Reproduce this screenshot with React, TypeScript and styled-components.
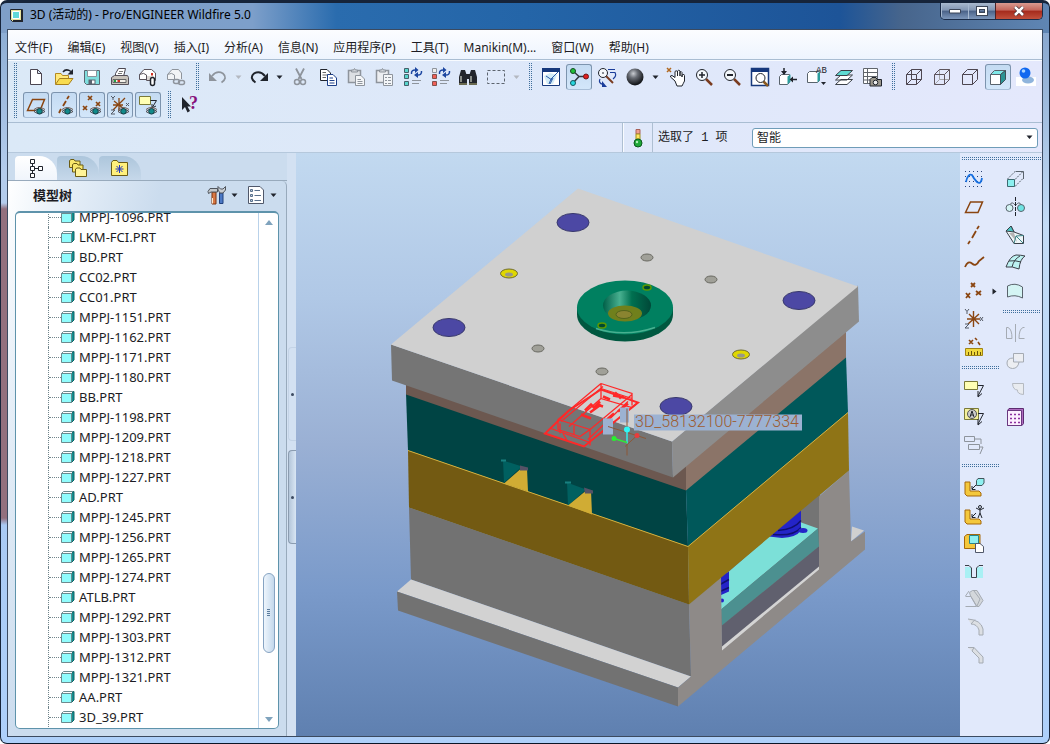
import React from "react";
import styled, { createGlobalStyle, css } from "styled-components";

const GlobalStyle = createGlobalStyle`
  *, *::before, *::after { box-sizing: border-box; }
  body {
    margin: 0;
    font: 12px/16px "Noto Sans", "Noto Sans CJK SC", sans-serif;
    color: #1c1c24;
  }
  button, select { font: inherit; color: inherit; }
`;

/* ---------- window frame ---------- */

const Frame = styled.div`
  display: flex;
  flex-direction: column;
  height: 100vh;
  padding: 0 6px 6px;
  border: 1px solid #16243a;
  border-top-width: 3px;
  border-bottom-color: #0c1626;
  border-radius: 7px;
  background:
    linear-gradient(90deg, #7f9fc8 0, #7d9fca 24%, #2a6cae 32%, #2465a8 50%, #1d5498 80%, #47658c 86%, #5f86b4 100%) top / 100% 30px no-repeat,
    linear-gradient(180deg, #86a8d0 0, #b4ccec 170px, #b4ccec 200px, #93707e 206px, #93707e 515px, #a9caf4 522px, #aed0fa 100%) left / 6px 100% no-repeat,
    linear-gradient(180deg, #7f9fc8 0, #c4dcf6 30%, #aed0fa 100%);
`;

const TitleBar = styled.header`
  display: flex;
  align-items: center;
  justify-content: space-between;
  height: 26px;
  flex: none;
`;

const Title = styled.h1`
  display: flex;
  align-items: center;
  gap: 6px;
  margin: 0;
  padding: 0 8px 2px 1px;
  font-size: 12px;
  line-height: 22px;
  font-weight: 400;
  color: #000;
`;

const WindowButtons = styled.div`
  display: flex;
  align-self: flex-start;
  border: 1px solid #1b2c48;
  border-top: 0;
  border-radius: 0 0 5px 5px;
  overflow: hidden;
`;

const WindowButton = styled.button<{ $close?: boolean }>`
  display: flex;
  align-items: center;
  justify-content: center;
  width: ${(p) => (p.$close ? 47 : 27)}px;
  height: 16px;
  padding: 0;
  border: 0;
  border-left: 1px solid ${(p) => (p.$close ? "#4a2228" : "#a7b9d0")};
  background: ${(p) =>
    p.$close
      ? "linear-gradient(#d99a90 0, #c4655a 45%, #a52a1c 50%, #c2503c 100%)"
      : "linear-gradient(#a9b9ce 0, #8195b2 45%, #4a6288 50%, #7d97bb 100%)"};
`;

const Client = styled.div`
  display: flex;
  flex-direction: column;
  flex: 1;
  min-height: 0;
  border: 1px solid #3b4a60;
  background: linear-gradient(90deg, #dbe9f7 0, #dfe8fa 60%, #e4e8fc 100%);
`;

/* ---------- menu and toolbars ---------- */

const MenuBar = styled.nav`
  display: flex;
  align-items: center;
  gap: 15px;
  height: 30px;
  padding: 6px 7px 0;
  flex: none;
  background: linear-gradient(#fcfdff, #edf4fe);
  border-bottom: 1px solid #a9bdd2;
`;

const MenuItem = styled.button`
  padding: 0;
  border: 0;
  background: none;
  white-space: nowrap;
`;

const ToolbarArea = styled.div`
  flex: none;
  padding: 2px 0 3px;
  border-top: 1px solid #f8fbff;
  border-bottom: 1px solid #a9bdd2;
`;

const ToolRow = styled.div`
  display: flex;
  height: 28px;
`;

const grip = css`
  background: conic-gradient(#3f6f9c 25%, transparent 0) 0 0 / 2px 2px;
`;

const Grip = styled.span`
  flex: none;
  width: 4px;
  margin: 0 5px;
  ${grip}
`;

const ToolButton = styled.button<{ $pressed?: boolean }>`
  display: flex;
  align-items: center;
  justify-content: center;
  flex: none;
  width: 26px;
  height: 26px;
  margin: 1px;
  padding: 0;
  border: 1px solid ${(p) => (p.$pressed ? "#7d94ae" : "transparent")};
  border-bottom-color: ${(p) => (p.$pressed ? "#a9bfd8" : "transparent")};
  border-radius: 3px;
  background: ${(p) => (p.$pressed ? "linear-gradient(#c4dbf2, #d3e7fa)" : "none")};

  svg { overflow: visible; }
`;

const DropButton = styled.button`
  display: flex;
  align-items: center;
  justify-content: center;
  flex: none;
  width: 13px;
  padding: 0;
  border: 0;
  background: none;
`;

/* ---------- status strip ---------- */

const StatusBar = styled.div`
  display: flex;
  flex: none;
  height: 30px;
  border-bottom: 1px solid #b5c8dc;
`;

const Message = styled.div`
  flex: 1;
  border-right: 1px solid #aebfd2;
`;

const StatusLight = styled.div`
  display: flex;
  align-items: center;
  justify-content: center;
  width: 30px;
  border-right: 1px solid #aebfd2;
  border-left: 1px solid #f8fbff;
`;

const Selected = styled.div`
  display: flex;
  align-items: center;
  width: 99px;
  padding: 1px 5px 0;
  font-family: "Liberation Mono", "Noto Sans CJK SC", monospace;
  white-space: pre;
`;

const FilterBox = styled.label`
  position: relative;
  display: flex;
  align-items: center;
  width: 290px;
  padding-right: 4px;

  select {
    width: 100%;
    height: 20px;
    padding: 0 4px;
    border: 1px solid #6f9cb8;
    border-radius: 3px;
    background: #fff;
    appearance: none;
  }

  svg {
    position: absolute;
    right: 9px;
    pointer-events: none;
  }
`;

/* ---------- main area ---------- */

const Main = styled.div`
  display: flex;
  flex: 1;
  min-height: 0;
`;

const Navigator = styled.aside`
  display: flex;
  flex-direction: column;
  width: 279px;
  flex: none;
  background: #cbdcee;
`;

const Tabs = styled.div`
  display: flex;
  height: 28px;
  flex: none;
  padding: 3px 7px 0;
  border-bottom: 1px solid #98aabc;
`;

const Tab = styled.button<{ $active?: boolean }>`
  display: flex;
  align-items: center;
  width: 42px;
  padding: 0 0 0 ${(p) => (p.$active ? 10 : 11)}px;
  border: 0;
  border-radius: 4px 18px 0 0;
  background: ${(p) => (p.$active ? "linear-gradient(#fff, #f0f5fc)" : "linear-gradient(#adc6dc, #c6d8ea)")};
`;

const Panel = styled.section`
  display: flex;
  flex-direction: column;
  flex: 1;
  min-height: 0;
  padding: 0 7px;
  padding-bottom: 7px;
  border-right: 1px solid #98aabc;
  border-radius: 0 5px 0 0;
  background: linear-gradient(105deg, #ffffff 0, #e6eff8 60px, #cbdcee 150px);
`;

const PanelHead = styled.div`
  display: flex;
  align-items: center;
  gap: 6px;
  height: 30px;
  flex: none;
  padding: 0 0 2px 18px;

  h2 {
    flex: 1;
    margin: 0;
    font-size: 13px;
    font-weight: 700;
  }
`;

const HeadTool = styled.button`
  display: flex;
  align-items: center;
  gap: 4px;
  width: 33px;
  padding: 0;
  border: 0;
  background: none;
`;

const TreeBox = styled.div`
  display: flex;
  flex: 1;
  min-height: 0;
  border: 1px solid #5e93ab;
  border-top-width: 2px;
  border-radius: 5px;
  background: #fff;
  overflow: hidden;
`;

const Tree = styled.ul`
  display: flex;
  flex-direction: column;
  justify-content: flex-end;
  flex: 1;
  min-height: 0;
  margin: 0;
  padding: 0 0 1px 32px;
  list-style: none;
  overflow: hidden;
`;

const TreeRow = styled.li`
  display: flex;
  align-items: center;
  flex: none;
  height: 20px;
  border-left: 1px dotted #71858c;

  &::before {
    content: "";
    width: 12px;
    border-top: 1px dotted #71858c;
  }

  button {
    display: flex;
    align-items: center;
    gap: 4px;
    padding: 0;
    border: 0;
    background: none;
    font-size: 13px;
  }
`;

const ScrollBar = styled.div`
  display: flex;
  flex-direction: column;
  align-items: center;
  width: 20px;
  padding: 2px 0;
  border-left: 1px solid #b9d2ea;

  button {
    width: 100%;
    height: 14px;
    padding: 0;
    border: 0;
    background: none;
    line-height: 0;
  }
`;

const Track = styled.div`
  display: flex;
  flex: 1;
  flex-direction: column;
`;

const TrackBefore = styled.div`
  flex: 346 0 0;
`;

const Thumb = styled.div`
  display: flex;
  align-items: center;
  justify-content: center;
  flex: 79 0 0;
  width: 12px;
  border: 1px solid #86a3c2;
  border-radius: 6px;
  background: linear-gradient(90deg, #eef5fc, #c3d8ec);
`;

const TrackAfter = styled.div`
  flex: 59 0 0;
`;

const Sash = styled.div`
  display: flex;
  flex-direction: column;
  flex: none;
  width: 9px;
  padding: 194px 0 0 1px;
  background: #d3e1f2;
`;

const SashHandle = styled.button<{ $raised?: boolean }>`
  display: flex;
  align-items: center;
  justify-content: center;
  height: 94px;
  margin-bottom: 9px;
  padding: 0;
  border: 1px solid ${(p) => (p.$raised ? "#8b9cb0" : "#c3d3e6")};
  border-right: 0;
  border-radius: 4px 0 0 4px;
  background: ${(p) => (p.$raised ? "linear-gradient(90deg, #b4c6da, #d9e6f4)" : "none")};

  &::before {
    content: "";
    width: 3px;
    height: 3px;
    border-radius: 50%;
    background: #3c4a60;
  }
`;

const Viewport = styled.main`
  flex: 1;
  min-width: 0;
  background: linear-gradient(#c2d9f0 0, #b0c8e6 25%, #9ab0d4 50%, #7a9aca 75%, #5f80b0 100%);

  svg {
    display: block;
    width: 100%;
    height: 100%;
  }
`;

const SideTools = styled.aside`
  display: grid;
  grid-template-columns: 41px 41px;
  grid-template-rows: 12px 1fr;
  flex: none;
  background: #e1e9fb;
`;

const SideTop = styled.span`
  grid-column: 1 / 3;
  height: 4px;
  margin: 4px 1px;
  ${grip}
`;

const SideColumn = styled.div`
  display: flex;
  flex-direction: column;
`;

const SideGrip = styled.span`
  height: 4px;
  margin: 5px 1px;
  ${grip}
`;

const SideRow = styled.div`
  display: flex;
`;

/* ---------- icons ---------- */

const BROWN = "#8a4510";
const GREY = "#8e949c";
const INK = "#20242c";

const eye = (
  <>
    <path d="M8 16.5 Q13 11.5 19 16.5 Q13 20.5 8 16.5Z" fill="#dfeaf0" stroke="#4a4a52" />
    <circle cx="13.5" cy="16.3" r="2.8" fill="#128a8a" stroke="#173c44" />
    <path d="M8 14.5 Q13 10.5 19 14.5" fill="none" stroke="#6d5a50" />
  </>
);

const swap = (
  <>
    <path d="M9.500 7Q9 2.500 14 3 M19.500 4Q20 8.500 15 8" fill="none" stroke="#1c46a0" strokeWidth="1.500" />
    <path d="M13 0L16.500 3L13 6Z M16 5L12 8L16 11Z" fill="#1c46a0" />
    <path d="M10 13.500H19 M10 16.500H17" stroke={GREY} />
  </>
);

const magnifier = (
  <>
    <path d="M12 12 L18 18" stroke="#7a3c20" strokeWidth="2.500" />
    <circle cx="8" cy="8" r="5.500" fill="#f4f8fc" stroke={INK} />
  </>
);

const wire = "M2.500 7.500H12.500V17.500H2.500Z M2.500 7.500L7.500 2.500H17.500V12.500L12.500 17.500 M12.500 7.500L17.500 2.500";

const callout = <path d="M14 6.500H19.500L14 17 M14 12V18L18 14.500" fill="none" stroke={INK} />;

const bracket = (
  <path d="M1 5H6V14H15L17 16V19H3L1 17Z" fill="#f4c83c" stroke="#a5690c" />
);

const icons: Record<string, React.ReactNode> = {
  file: (
    <path d="M4.500 2.500H11.500L15.500 6.500V17.500H4.500Z M11.500 2.500V6.500H15.500" fill="#fff" stroke="#4b4550" />
  ),
  open: (
    <>
      <path d="M1.500 17V6.500H7L8.500 8.500H14.500V11" fill="#ffe97a" stroke="#b58a20" />
      <path d="M1.500 17.500L5.500 11.500H19L14.500 17.500Z" fill="#f8dc50" stroke="#a8801c" />
      <path d="M9 5 Q12 1 17 4.500" fill="none" stroke={INK} strokeWidth="1.500" />
      <path d="M19 2V7.500H13.500Z" fill={INK} />
    </>
  ),
  save: (
    <>
      <path d="M2.500 3.500H17.500V17.500H4.500L2.500 15.500Z" fill="#7fdede" stroke="#5a6670" />
      <path d="M5.500 3.500H14.500V9.500H5.500Z" fill="#fff" stroke="#8a949c" />
      <path d="M6.500 12.500H13.500V17.500H6.500Z" fill="#5c6470" />
      <path d="M10 13.500H12.500V16.500H10Z" fill="#fff" />
    </>
  ),
  print: (
    <>
      <path d="M5.500 9.500V6.500L8.500 1.500H15.500L13.500 9.500Z" fill="#fff" stroke="#4a4650" />
      <path d="M9 4.500H13 M8 6.500H12" stroke="#777" />
      <path d="M1.500 10.500L4.500 8.500H17.500L18.500 10.500V17.500H1.500Z" fill="#c9c4bc" stroke="#555058" />
      <path d="M3 12.500H16V15.500H3Z" fill="#f2efe8" stroke="#666" />
      <path d="M4 13H6V15H4Z" fill="#20a040" />
      <path d="M7.500 13H10V15H7.500Z" fill="#d03020" />
    </>
  ),
  mail: (
    <>
      <path d="M1.500 12.500V7.500L6 2.500H13.500L17.500 6V13.500H8.500V12.500Z" fill="#fff" stroke="#5a545c" />
      <path d="M1.500 7.500Q6 5 8.500 8V13" fill="none" stroke="#5a545c" />
      <path d="M9 9H16V13H9Z" fill="#dcd8d4" />
      <path d="M13 6H15V8.500H13Z" fill="#d03020" />
      <rect x="12.500" y="10.500" width="4" height="8" rx="2" fill="#fff" stroke={INK} strokeWidth="1.500" />
    </>
  ),
  mailLink: (
    <>
      <path d="M1.500 12.500V7.500L6 2.500H12.500L15.500 6V12" fill="#f2f4f6" stroke={GREY} />
      <path d="M1.500 7.500Q6 5 8.500 8V12.500H1.500" fill="none" stroke={GREY} />
      <rect x="7.500" y="12.500" width="6" height="4" rx="2" fill="none" stroke={GREY} strokeWidth="1.500" />
      <rect x="12.500" y="13.500" width="6" height="4" rx="2" fill="none" stroke={GREY} strokeWidth="1.500" />
    </>
  ),
  undo: (
    <>
      <path d="M4 9 Q9 3 15 6.500 Q20 11 13.500 15.500" fill="none" stroke={GREY} strokeWidth="1.700" />
      <path d="M1 6V14H9Z" fill={GREY} />
    </>
  ),
  redo: (
    <>
      <path d="M16 9 Q11 3 5 6.500 Q0 11 6.500 15.500" fill="none" stroke={INK} strokeWidth="2" />
      <path d="M19 6V14H11Z" fill={INK} />
    </>
  ),
  cut: (
    <>
      <path d="M6 1.500L11.500 12 M14 1.500L8.500 12" stroke={GREY} strokeWidth="1.800" />
      <circle cx="7" cy="15" r="2.500" fill="none" stroke={GREY} strokeWidth="1.500" />
      <circle cx="13" cy="15" r="2.500" fill="none" stroke={GREY} strokeWidth="1.500" />
    </>
  ),
  copy: (
    <>
      <path d="M2.500 2.500H9L12.500 6V13.500H2.500Z" fill="#fff" stroke={INK} />
      <path d="M4.500 5.500H8 M4.500 8H10 M4.500 10.500H8" stroke="#666" />
      <path d="M9.500 7.500H15L18.500 11V18.500H9.500Z" fill="#fff" stroke="#1c3f88" />
      <path d="M11.500 11H15 M11.500 13.500H16.500 M11.500 16H16.500" stroke="#1c3f88" />
    </>
  ),
  paste: (
    <>
      <path d="M2.500 3.500H14.500V15.500H2.500Z" fill="#dcdfe3" stroke={GREY} strokeWidth="1.500" />
      <path d="M5.500 5V3H7.500L8.500 1.500L9.500 3H11.500V5Z" fill="#cfd3d8" stroke={GREY} />
      <path d="M9.500 8.500H15L18.500 12V18.500H9.500Z" fill="#f4f6f8" stroke={GREY} />
      <path d="M11.500 12.500H15 M11.500 14.500H16.500 M11.500 16.500H16.500" stroke={GREY} />
    </>
  ),
  pasteList: (
    <>
      <path d="M2.500 3.500H14.500V15.500H2.500Z" fill="#eceef1" stroke={GREY} strokeWidth="1.500" />
      <path d="M5.500 5V3H7.500L8.500 1.500L9.500 3H11.500V5Z" fill="#cfd3d8" stroke={GREY} />
      <path d="M9.500 7.500H18.500V18.500H9.500Z" fill="#f4f6f8" stroke={GREY} />
      <path d="M11 10.500H13 M14 10.500H17 M11 13.500H13 M14 13.500H17 M11 16.500H13 M14 16.500H17" stroke={GREY} />
    </>
  ),
  regen: (
    <>
      <path d="M2.500 1.500H6.500V5.500H2.500Z M2.500 7.500H6.500V11.500H2.500Z M2.500 14.500H6.500V18.500H2.500Z" fill="#58d4cc" stroke="#45606a" />
      {swap}
    </>
  ),
  regenSel: (
    <>
      <path d="M2.500 1.500H6.500V5.500H2.500Z" fill="#eee" stroke={GREY} />
      <path d="M2.500 7.500H6.500V11.500H2.500Z M2.500 14.500H6.500V18.500H2.500Z" fill="#f06058" stroke="#84504c" />
      {swap}
    </>
  ),
  find: (
    <>
      <path d="M3 3H7L9 9V17H1V10Z M13 3H17L19 10V17H11V9Z M8 7H12V12H8Z" fill="#23262c" />
      <path d="M3 9V15 M13 9V15" stroke="#aeb2a8" strokeWidth="1.500" />
      <path d="M1 17H9 M11 17H19" stroke="#6a6a50" strokeWidth="2" />
    </>
  ),
  marquee: <path d="M1.500 3.500H18.500V16.500H1.500Z" fill="none" stroke="#5c646e" strokeDasharray="3 2" />,
  sketchView: (
    <>
      <path d="M1.500 1.500H18.500V18.500H1.500Z" fill="#fff" stroke="#16387c" />
      <path d="M1 1H19V5H1Z" fill="#16387c" />
      <path d="M3 9L6 17H12L16 8L9 6Z" fill="#d3ecf7" />
      <path d="M8 17L10 12L17 5 M5 9L11 13 M9 17L12 11" fill="none" stroke="#2a5aa8" />
    </>
  ),
  spin: (
    <>
      <path d="M4 4L10 9.500L4 16 M10 9.500H17" fill="none" stroke="#33383f" strokeWidth="1.500" />
      <circle cx="4" cy="4" r="2.500" fill="#20c038" stroke="#134a20" />
      <circle cx="17" cy="9.500" r="2.500" fill="#e02020" stroke="#701818" />
      <circle cx="4" cy="16" r="2.500" fill="#28d8e0" stroke="#145a60" />
    </>
  ),
  reorient: (
    <>
      <path d="M9 9L16 16" stroke="#7a3c20" strokeWidth="2" />
      <circle cx="6" cy="6" r="4.500" fill="#f5f8fb" stroke={INK} />
      <path d="M5 6H7" stroke={INK} />
      <path d="M11 2.500H18 M13 5.500H18Q20 9 16 12 M3 12Q1 16 6 17.500" fill="none" stroke="#1b3d9a" strokeWidth="1.200" />
      <path d="M5 14V20H10Z" fill="#1b3d9a" />
    </>
  ),
  sphere: (
    <>
      <defs>
        <radialGradient id="ball" cx="40%" cy="30%" r="65%">
          <stop offset="0" stopColor="#c9ccd2" />
          <stop offset=".4" stopColor="#6a6e76" />
          <stop offset="1" stopColor="#16181c" />
        </radialGradient>
      </defs>
      <circle cx="10" cy="10" r="8.500" fill="url(#ball)" />
    </>
  ),
  pan: (
    <>
      <path d="M1 1L5 5 M5 1L1 5" stroke="#b06820" strokeWidth="1.500" />
      <path d="M9 14L4.500 10Q4 8.500 6 8.500L9 10.500V4.500Q10 3 11.500 4.500V9V4Q12.500 2.500 14 4V9V5Q15.500 4 16 5.500V10V8Q18.500 6.500 18.500 8.500V14Q17 17 16 19H11Z" fill="#fff" stroke={INK} />
    </>
  ),
  zoomIn: (
    <>
      {magnifier}
      <path d="M5 8H11 M8 5V11" stroke={INK} strokeWidth="1.500" />
    </>
  ),
  zoomOut: (
    <>
      {magnifier}
      <path d="M5 8H11" stroke={INK} strokeWidth="2" />
    </>
  ),
  refit: (
    <>
      <path d="M1.500 1.500H18.500V18.500H1.500Z" fill="#fff" stroke="#16387c" strokeWidth="1.500" />
      <path d="M1 1H19V5H1Z" fill="#16387c" />
      <path d="M13 14L18 19" stroke="#8a5a20" strokeWidth="2.500" />
      <circle cx="10.500" cy="11" r="4.500" fill="#fff" stroke={INK} />
    </>
  ),
  orient: (
    <>
      <path d="M1.500 9.500L3.500 7.500H11.500V15.500L9.500 17.500H1.500Z" fill="#fff" stroke="#59636c" />
      <path d="M9.500 17.500V9.500L12.500 7.500V14.500Z" fill="#2d9d9d" />
      <path d="M6 1V7 M19 12.500H13" stroke={INK} strokeWidth="1.500" />
      <path d="M3 4H9L6 8Z M15 9.500V15.500L11.500 12.500Z" fill={INK} />
    </>
  ),
  savedView: (
    <>
      <path d="M1.500 6.500L3.500 4.500H13.500V13.500L11.500 15.500H1.500Z" fill="#fff" stroke="#59636c" />
      <path d="M11.500 15.500V6.500L14 4.500V13Z" fill="#2d9d9d" />
      <text x="10" y="6" fontSize="9" fontFamily="Liberation Mono, monospace" fill={INK}>AB</text>
      <path d="M15 15H20L17.500 18Z" fill={INK} />
    </>
  ),
  layers: (
    <>
      <path d="M1.500 17.500L7 12.500H18.500L13 17.500Z M1.500 13L7 8H18.500L13 13Z" fill="#fff" stroke="#3b4048" />
      <path d="M1.500 8.500L7 3.500H18.500L13 8.500Z" fill="#5fdcd4" stroke="#3b4048" />
    </>
  ),
  viewManager: (
    <>
      <path d="M1.500 1.500H15.500V16.500H1.500Z M1.500 5.500H15.500 M1.500 9.500H15.500 M1.500 13H15.500 M5.500 1.500V16.500" fill="#fff" stroke="#60656c" />
      <path d="M8 12.500L10 10.500H14L15 12.500H19.500V19H8Z" fill="#9b978c" stroke={INK} />
      <circle cx="13.500" cy="15.500" r="2.300" fill="#eee" stroke={INK} />
    </>
  ),
  wireframe: <path d={`${wire} M7.500 2.500V12.500H17.500 M7.500 12.500L2.500 17.500`} fill="none" stroke="#4d4650" />,
  hidden: (
    <>
      <path d="M7.500 2.500V12.500H17.500 M7.500 12.500L2.500 17.500" fill="none" stroke="#a5a5a8" />
      <path d={wire} fill="none" stroke="#5d545c" />
    </>
  ),
  noHidden: <path d={wire} fill="none" stroke="#4d4650" />,
  shaded: (
    <>
      <path d="M2.500 7.500H12.500V17.500H2.500Z" fill="#fff" stroke="#59636c" />
      <path d="M2.500 7.500L6.500 3.500H17.500L12.500 7.500Z" fill="#7fe8e8" stroke="#59636c" />
      <path d="M12.500 7.500L17.500 3.500V12.500L12.500 17.500Z" fill="#2b9494" stroke="#405058" />
    </>
  ),
  pearl: (
    <>
      <path d="M0 10H20V19H0Z" fill="#fff" />
      <ellipse cx="12" cy="13" rx="6" ry="3.500" fill="#8fb4dc" />
      <circle cx="9" cy="6" r="5.500" fill="#1068f0" />
      <circle cx="7.500" cy="4" r="1.800" fill="#a8d4ff" />
    </>
  ),
  planeEye: (
    <>
      <path d="M1.500 15.500L6.500 4.500H18.500L14 15.500Z" fill="none" stroke={BROWN} strokeWidth="1.500" />
      {eye}
    </>
  ),
  axisEye: (
    <>
      <path d="M5 18L7 14 M9 11L12 6 M13 4L15 1" stroke={BROWN} strokeWidth="1.800" />
      {eye}
    </>
  ),
  pointsEye: (
    <>
      <path d="M6 1L10 5 M10 1L6 5 M14 7L18 11 M18 7L14 11 M1 11L5 15 M5 11L1 15" stroke={BROWN} strokeWidth="1.700" />
      {eye}
    </>
  ),
  csysEye: (
    <>
      <path d="M3 15L15 3 M4 6L14 14 M9 3V16 M3 10H13" stroke={BROWN} strokeWidth="1.300" />
      <path d="M1 1L3 3L5 1 M3 3V5 M16 8L19 11 M19 8L16 11 M1 15H5L1 19H5" fill="none" stroke="#555b66" />
      {eye}
    </>
  ),
  noteEye: (
    <>
      <path d="M1.500 1.500H12.500V9.500H1.500Z" fill="#ffffb4" stroke="#7a7a38" />
      <path d="M12.500 5.500H18.500L14 13 M14 9V13L18 11" fill="none" stroke={INK} />
      {eye}
    </>
  ),
  help: (
    <>
      <path d="M2 2V15L5 12L7.500 17.500L10 16L7.500 11.500H11Z" fill={INK} />
      <text x="9" y="14" fontSize="18" fontFamily="Liberation Serif, serif" fontWeight="700" fill="#86107c">?</text>
    </>
  ),
  light: (
    <>
      <path d="M8 1.500H12V6H8Z" fill="#f0a090" stroke="#a86058" />
      <path d="M8 6H12V11H8Z" fill="#ffe860" stroke="#a09020" />
      <circle cx="10" cy="15" r="4" fill="#1ea838" stroke="#0a5a1c" />
      <circle cx="9" cy="14" r="1.200" fill="#b0f0b8" />
    </>
  ),
  tree: (
    <path d="M5.500 1.500H9.500V5.500H5.500Z M5.500 8.500H9.500V12.500H5.500Z M13.500 8.500H17.500V12.500H13.500Z M5.500 15.500H9.500V19.500H5.500Z M9.500 10.500H13.500 M7.500 5.500V8.500 M7.500 12.500V15.500" fill="#fff" stroke={INK} />
  ),
  folders: (
    <>
      <path d="M1.500 9.500V2.500L3 1.500H6L7 3H12V9.500Z" fill="#f8e86c" stroke="#6b5c14" />
      <path d="M4.500 14V6.500L6 5.500H9L10 7H15V14Z" fill="#f8e86c" stroke="#6b5c14" />
      <path d="M7.500 18.500V11L9 10H12L13 11.500H18.500V18.500Z" fill="#fff498" stroke="#6b5c14" />
    </>
  ),
  favorites: (
    <>
      <path d="M1.500 17.500V4.500L3 2.500H7L8.500 4.500H17.500V17.500Z" fill="#fff07c" stroke="#6b5c14" />
      <path d="M9.500 7V15 M5.500 11H13.500 M6.500 8L12.500 14 M12.500 8L6.500 14" stroke="#2438c0" />
    </>
  ),
  settings: (
    <>
      <path d="M5 7H9V19H5Z" fill="#d87844" stroke="#7c3410" />
      <path d="M5.500 13V18.500" stroke="#f8e8d0" />
      <path d="M1 6.500L3 3.500H10.500V7H4L1.500 8.500Z" fill="#c4c8cb" stroke="#50555c" />
      <path d="M12.500 8H16V18.500H12.500Z" fill="#4b78c4" stroke="#20407c" />
      <path d="M11 1.500V5L13 8H16L18.500 5V1.500L16 4H13.500Z" fill="#c9cdd2" stroke="#50555c" />
    </>
  ),
  show: (
    <>
      <path d="M2.500 1.500H14L17.500 5V18.500H2.500Z" fill="#fff" stroke="#50586a" />
      <path d="M8.500 5.500H14 M8.500 10.500H15 M8.500 15.500H15" stroke="#59708c" />
      <path d="M4.500 4.500H6.500V6.500H4.500Z M4.500 9.500H6.500V11.500H4.500Z M4.500 14.500H6.500V16.500H4.500Z" fill="#bcd" stroke="#59708c" />
    </>
  ),
  sketch: (
    <>
      <path d="M1 2.500H19 M1 7.500H19 M1 12.500H19 M1 17.500H19" stroke="#2c4478" strokeDasharray="1 3" />
      <path d="M2 13Q4 4 8 6Q10 10 13 13Q17 16 18 9" fill="none" stroke="#1870e0" strokeWidth="1.800" />
    </>
  ),
  plane: <path d="M1.500 15.500L6.500 5H18.500L14 15.500Z" fill="none" stroke={BROWN} strokeWidth="1.500" />,
  axis: <path d="M4 19L6 16 M8 13L12 6 M13 4L15 1" stroke={BROWN} strokeWidth="1.800" />,
  curve: <path d="M1 14Q4 7 8 10.500Q12 14 15 8L20 4" fill="none" stroke={BROWN} strokeWidth="1.800" />,
  points: (
    <path d="M7 2L11 6 M11 2L7 6 M12 10L17 14 M17 10L12 14 M2 12L6 17 M6 12L2 17" stroke={BROWN} strokeWidth="1.800" />
  ),
  csys: (
    <>
      <path d="M4 15L15 5 M5 5L15 15 M9.500 2V18 M3 10H16" stroke={BROWN} strokeWidth="1.400" />
      <path d="M1 0L3 2.500L5 0 M3 2.500V5 M16 8L19 12 M19 8L16 12 M1 15H5L1 19H5" fill="none" stroke="#555b66" />
    </>
  ),
  analysis: (
    <>
      <path d="M5 3L9 7 M9 3L5 7 M11 1L13 3 M14 5L16 8" stroke={BROWN} strokeWidth="1.600" />
      <path d="M1.500 11.500H18.500V18.500H1.500Z" fill="#f0d83c" stroke="#a08414" />
      <path d="M4.500 18V15 M7.500 18V14 M10.500 18V15 M13.500 18V14 M16.500 18V15" stroke="#6a5408" />
    </>
  ),
  note: (
    <>
      <path d="M0.500 2.500H13.500V10.500H0.500Z" fill="#ffffb4" stroke="#7a7a38" />
      {callout}
    </>
  ),
  noteA: (
    <>
      <path d="M0.500 1.500H14.500V12.500H0.500Z" fill="#f4f09c" stroke="#7a7a38" />
      <circle cx="8" cy="7" r="4.500" fill="#ccc" stroke="#555" />
      <path d="M6 10L8 4L10 10 M7 8H9" fill="none" stroke={INK} />
      {callout}
    </>
  ),
  noteLink: (
    <path d="M0.500 1.500H10.500V6.500H0.500Z M4.500 9.500H15.500V14.500H4.500Z M10.500 4H17V9 M15.500 12H19L16 19" fill="none" stroke={GREY} />
  ),
  assemble: (
    <>
      {bracket}
      <path d="M12.500 3.500L14 1.500H20V6L18 8.500H12.500Z" fill="#8ff0f0" stroke="#42565c" />
      <path d="M12 8L8 12 M8 9V12.500H11.500" fill="none" stroke={INK} />
    </>
  ),
  manikin: (
    <>
      {bracket}
      <circle cx="16" cy="2" r="1.500" fill="none" stroke={INK} />
      <path d="M16 4V8L14 13 M16 8L18 13 M12 3L16 5L20 3 M12 8L8 12 M8 9V12.500H11.500" fill="none" stroke={INK} />
    </>
  ),
  create: (
    <>
      <path d="M0.500 3.500L3 1.500H16V12L13 15.500H0.500Z" fill="#f4c83c" stroke="#a5690c" />
      <path d="M5.500 2.500H14.500V10.500H5.500Z" fill="#8ff0f0" stroke="#26868c" />
      <path d="M11.500 10.500H16L19.500 13.500V19.500H11.500Z" fill="#fff" stroke="#50586a" />
    </>
  ),
  hole: (
    <>
      <path d="M1 6H6L8 8V17H1Z M19 6H14L12 8V17H19Z" fill="#a9f0f4" />
      <path d="M1 4.500H5L7.500 7V16.500H12.500V7L15 4.500H19" fill="none" stroke="#3b4048" />
    </>
  ),
  shell: (
    <>
      <path d="M5.500 3.500L8.500 1.500H13L19 11.500L15 17.500H13L6.500 7Z" fill="#d3d7db" stroke="#a5abb3" />
      <path d="M1.500 7.500H7L12.500 17.500H1.500 M5 2L1.500 7 M13 17L16 10L10 2" fill="none" stroke="#a5abb3" />
    </>
  ),
  round: <path d="M4 2Q17 3 19 12V18H15V13Q13 7 7 7 M11 2.500L7 7" fill="#dcdfe3" stroke="#a5abb3" />,
  chamfer: <path d="M4 2.500H10L19 12V18H15V13L8 6 M10 2.500L8 6" fill="#dcdfe3" stroke="#a5abb3" />,
  extrude: (
    <>
      <path d="M2.500 10L10 2.500 M10 17.500L18.500 9 M10 10.500L18.500 2" fill="none" stroke="#59636c" strokeDasharray="2 1" />
      <path d="M10.500 2.500H18.500V10" fill="none" stroke="#59636c" />
      <path d="M2.500 10.500H9.500V17.500H2.500Z" fill="#8cf0f0" stroke="#3d6a70" />
    </>
  ),
  revolve: (
    <>
      <circle cx="4.500" cy="11" r="3.500" fill="#d4f4f4" stroke="#59636c" />
      <circle cx="16" cy="11" r="3.500" fill="#6fe4e4" stroke="#59636c" />
      <path d="M10.500 0V20" stroke={INK} strokeDasharray="4 1" />
      <path d="M5 7.500Q7 4 10 8 M11 8Q14 4 16 7.500" fill="none" stroke="#59636c" />
    </>
  ),
  sweep: (
    <>
      <path d="M1 6L6 1L9 7L18.500 10.500V18.500H9Z" fill="#eef6f8" stroke="#3b4048" />
      <path d="M1 6L6 1L9 7Z" fill="#4cc4c4" stroke="#3b4048" />
      <path d="M4 8L9 8L12 17Z" fill="#b4b4b4" />
      <path d="M11 11L18.500 18.500 M9 18.500L11 11L18.500 10.500" fill="none" stroke="#3b8488" />
    </>
  ),
  boundary: (
    <>
      <path d="M1 14Q5 3 11 2Q16 2 20 3Q15 6 14 16Q7 13 1 14Z" fill="#bdf2f2" stroke="#3b4048" />
      <path d="M4 8Q10 7 16 9 M7 14Q9 6 15 3" fill="none" stroke="#3b4048" />
    </>
  ),
  style: <path d="M2.500 16V5Q10 1 17.500 6V17Q10 13 2.500 16Z" fill="#d4f4f4" stroke="#59636c" />,
  mirror: (
    <path d="M10.500 1V19 M1.500 4.500H3Q7 6 7 15.500H1.500Z M19.500 4.500H18Q14 6 14 15.500H19.500" fill="none" stroke="#a5abb3" />
  ),
  merge: (
    <path d="M8.500 2.500H18.500V11H14Q13 17.500 7.500 17.500Q2 17 2 12Q2 7 8.500 7Z M8.500 7V11H14" fill="#eceef2" stroke="#a5abb3" />
  ),
  trim: <path d="M7.500 4.500H18.500V15.500Q12 15 12.500 11Q8 11 7.500 4.500Z" fill="#e9ecf0" stroke="#b5bac1" />,
  pattern: (
    <>
      <path d="M2.500 3.500L4 1.500H18.500V16.500L17 18.500H2.500Z" fill="#b06cc0" stroke="#5c2c70" />
      <path d="M2.500 3.500H16.500V18.500H2.500Z" fill="#fbeefe" stroke="#6a3880" />
      <path d="M5 7.500H15 M5 11.500H15 M5 15.500H15" stroke="#8c30a0" strokeWidth="1.500" strokeDasharray="2 2" />
    </>
  ),
};

function Icon({ name, size = 20 }: { name: string; size?: number }) {
  return (
    <svg width={size} height={size} viewBox="0 0 20 20" aria-hidden="true">
      {icons[name]}
    </svg>
  );
}

function Arrow({ color = "#20242c" }: { color?: string }) {
  return (
    <svg width="7" height="5" viewBox="0 0 7 5" aria-hidden="true">
      <path d="M0.500 0.500H6.500L3.500 4Z" fill={color} />
    </svg>
  );
}

function PartIcon() {
  return (
    <svg width="14" height="12" viewBox="0 0 14 12" aria-hidden="true">
      <path d="M0.500 2.500L2.500 0.500H13L10.500 2.500Z" fill="#fff" stroke="#6c8a8e" />
      <path d="M10.500 2.500L13 0.500V9L10.500 11.500Z" fill="#129090" stroke="#0c6468" />
      <path d="M0.500 2.500H10.500V11.500H0.500Z" fill="#90fcfc" stroke="#6c8a8e" />
    </svg>
  );
}

/* ---------- content ---------- */

const menus = ["文件(F)", "编辑(E)", "视图(V)", "插入(I)", "分析(A)", "信息(N)", "应用程序(P)", "工具(T)", "Manikin(M)...", "窗口(W)", "帮助(H)"];

type Tool = { icon?: string; label?: string; pressed?: boolean; grip?: boolean; drop?: "on" | "off" };
const t = (icon: string, label: string, pressed = false): Tool => ({ icon, label, pressed });
const GRIP: Tool = { grip: true };
const DROP: Tool = { drop: "on" };
const DROP_OFF: Tool = { drop: "off" };

const rowOne: Tool[] = [
  GRIP, t("file", "新建"), t("open", "打开"), t("save", "保存"), t("print", "打印"), t("mail", "发送"), t("mailLink", "发送链接"),
  GRIP, t("undo", "撤消"), DROP_OFF, t("redo", "重做"), DROP, t("cut", "剪切"), t("copy", "复制"), t("paste", "粘贴"),
  t("pasteList", "选择性粘贴"), t("regen", "再生"), t("regenSel", "再生管理器"), t("find", "查找"), t("marquee", "选取框"), DROP_OFF,
  GRIP, t("sketchView", "重画"), t("spin", "旋转中心", true), t("reorient", "定向模式"), t("sphere", "外观库"), DROP,
  t("pan", "平移"), t("zoomIn", "放大"), t("zoomOut", "缩小"), t("refit", "重新调整"), t("orient", "重定向"), t("savedView", "已保存的视图"),
  t("layers", "层"), t("viewManager", "视图管理器"),
  GRIP, t("wireframe", "线框"), t("hidden", "隐藏线"), t("noHidden", "消隐"), t("shaded", "着色", true), t("pearl", "增强的真实感"),
];

const rowTwo: Tool[] = [
  GRIP, t("planeEye", "平面显示", true), t("axisEye", "轴显示", true), t("pointsEye", "点显示", true),
  t("csysEye", "坐标系显示", true), t("noteEye", "注释显示", true), GRIP, t("help", "上下文帮助"),
];

const sideOne: Tool[] = [
  t("sketch", "草绘"), t("plane", "平面"), t("axis", "轴"), t("curve", "曲线"), { ...t("points", "点"), drop: "on" }, t("csys", "坐标系"),
  t("analysis", "分析"), GRIP, t("note", "注释"), t("noteA", "符号"), t("noteLink", "传播"), GRIP, t("assemble", "装配"),
  t("manikin", "人体模型"), t("create", "创建"), t("hole", "孔"), t("shell", "壳"), t("round", "倒圆角"), t("chamfer", "倒角"),
];

const sideTwo: Tool[] = [
  t("extrude", "拉伸"), t("revolve", "旋转"), t("sweep", "扫描"), t("boundary", "边界混合"), t("style", "造型"), GRIP,
  t("mirror", "镜像"), t("merge", "合并"), t("trim", "修剪"), t("pattern", "阵列"),
];

const parts = [
  "MPPJ-1096", "LKM-FCI", "BD", "CC02", "CC01", "MPPJ-1151", "MPPJ-1162", "MPPJ-1171", "MPPJ-1180", "BB", "MPPJ-1198",
  "MPPJ-1209", "MPPJ-1218", "MPPJ-1227", "AD", "MPPJ-1245", "MPPJ-1256", "MPPJ-1265", "MPPJ-1274", "ATLB", "MPPJ-1292",
  "MPPJ-1303", "MPPJ-1312", "MPPJ-1321", "AA", "3D_39",
];

function Tools({ items }: { items: Tool[] }) {
  return (
    <ToolRow>
      {items.map((item, i) => {
        if (item.grip) return <Grip key={i} />;
        if (item.drop)
          return (
            <DropButton key={i} aria-label="更多">
              <Arrow color={item.drop === "off" ? "#b4b8c0" : undefined} />
            </DropButton>
          );
        return (
          <ToolButton key={i} $pressed={item.pressed} aria-label={item.label}>
            <Icon name={item.icon!} />
          </ToolButton>
        );
      })}
    </ToolRow>
  );
}

function SideTool({ items }: { items: Tool[] }) {
  return (
    <SideColumn>
      {items.map((item, i) =>
        item.grip ? (
          <SideGrip key={i} />
        ) : (
          <SideRow key={i}>
            <ToolButton aria-label={item.label}>
              <Icon name={item.icon!} />
            </ToolButton>
            {item.drop && (
              <DropButton aria-label="更多">
                <svg width="5" height="7" viewBox="0 0 5 7" aria-hidden="true">
                  <path d="M0.500 0.500V6.500L4.500 3.500Z" fill={INK} />
                </svg>
              </DropButton>
            )}
          </SideRow>
        )
      )}
    </SideColumn>
  );
}

function Mold() {
  return (
    <svg viewBox="296 153 664 584" preserveAspectRatio="xMidYMid slice" role="img" aria-label="模具装配">
      <defs>
        <linearGradient id="cone" x1="0" x2="1">
          <stop offset="0" stopColor="#006048" />
          <stop offset=".35" stopColor="#48b090" />
          <stop offset=".6" stopColor="#007050" />
          <stop offset="1" stopColor="#004838" />
        </linearGradient>
      </defs>

      {/* base plate and risers */}
      <path d="M409 508L689 605L691 677L411 580Z" fill="#727272" />
      <path d="M411 580L691 677L678 688L397 592Z" fill="#d2d2d2" />
      <path d="M397 592L678 688V707L398 611Z" fill="#727272" />
      <path d="M852 527L864 531L851 542Z" fill="#d0d0d0" />
      <path d="M719 570L820 490V571L722 652Z" fill="#747474" />
      <path d="M721 610V577L729 572L790 519L818 529Z" fill="#7ce0d8" />
      <path d="M769 537L801 510V531Q796 538 782 538.500Z" fill="#2424c8" />
      <path d="M778 531Q794 530 801 521 M773 535Q794 537 801 528" fill="none" stroke="#101070" strokeWidth="1.500" />
      <ellipse cx="803" cy="531" rx="4.500" ry="2.500" fill="#2424c8" />
      <path d="M720 577L729 572V592L720 596Z" fill="#2424c8" />
      <path d="M720 585L729 580 M720 592L729 588" stroke="#101070" strokeWidth="1.500" />
      <circle cx="722" cy="601" r="2" fill="#2424c8" />
      <path d="M721 610L818 529L819 547L722 626Z" fill="#4c9090" />
      <path d="M722 626L819 547V568L722 647Z" fill="#60606e" />
      <path d="M722 647L819 567V571L722 652Z" fill="#d4d4d4" />
      <path d="M678 707V688L691 677L689 605L721 577L722 651L819 570V497L849 471L851 542L865 532V550Z" fill="#8e8a88" />

      {/* gold plate */}
      <path d="M408 451L688 547L689 605L409 508Z" fill="#735a12" />
      <path d="M688 547L848 413L849 471L689 605Z" fill="#8f7416" />

      {/* teal plate */}
      <path d="M406 394L686 490L688 547L408 451Z" fill="#004444" />
      <path d="M686 490L846 357L848 413L688 547Z" fill="#00585a" />
      <path d="M408 451L688 547L848 413" fill="none" stroke="#d8b038" />
      <path d="M503 461L522 467L504 483Z M567 483L586 490L568 506Z" fill="#006060" />
      <path d="M501 460H506V462H501Z M565 482H571V484H565Z" fill="#188080" />
      <path d="M504 484L520 470L527 469L528 492Z M568 506L585 492L591 491L592 515Z" fill="#d0ac34" />
      <path d="M520 466L528 468V471H520Z M584 488L593 491V494H585Z" fill="#555266" />

      {/* brown spacer */}
      <path d="M406 384L673 476L686 466V491L406 395Z" fill="#6c5850" />
      <path d="M686 466L846 332V358L686 491Z" fill="#8b7468" />

      {/* top clamping plate */}
      <path d="M391 345L672 442L673 478L392 381Z" fill="#757575" />
      <path d="M672 442L858 286L859 322L673 478Z" fill="#8d8d8d" />
      <path d="M578 189L858 287L672 442L391 345Z" fill="#d0d0d0" />

      <g fill="#4c48a4" stroke="#38386c" strokeWidth="1">
        <ellipse cx="573" cy="223" rx="16" ry="9" />
        <ellipse cx="449" cy="328" rx="16" ry="9" />
        <ellipse cx="799" cy="301" rx="16" ry="9" />
        <ellipse cx="676" cy="407" rx="16" ry="9" />
      </g>
      <g fill="#a0a098" stroke="#686860">
        <ellipse cx="647" cy="258" rx="6" ry="3.500" />
        <ellipse cx="711" cy="280" rx="6" ry="3.500" />
        <ellipse cx="538" cy="349" rx="6" ry="3.500" />
        <ellipse cx="602" cy="372" rx="6" ry="3.500" />
      </g>
      <g fill="#e0d800" stroke="#706c30">
        <ellipse cx="509" cy="274" rx="8.500" ry="4.500" />
        <ellipse cx="741" cy="355" rx="8.500" ry="4.500" />
      </g>
      <g fill="#989888">
        <ellipse cx="509" cy="275" rx="4" ry="2" />
        <ellipse cx="741" cy="356" rx="4" ry="2" />
      </g>

      {/* locating ring */}
      <path d="M577 308V315A48 27 0 0 0 673 315V308Z" fill="#005840" />
      <ellipse cx="625" cy="308" rx="48" ry="27" fill="#008060" />
      <path d="M596 329Q625 338 655 328" fill="none" stroke="#48b090" strokeWidth="1.500" />
      <ellipse cx="627" cy="306" rx="24" ry="15" fill="url(#cone)" />
      <ellipse cx="625" cy="314" rx="17" ry="8" fill="#70801c" />
      <ellipse cx="624" cy="315" rx="8" ry="4" fill="#8a8430" stroke="#54641c" />
      <g fill="#004830" stroke="#5c9800" strokeWidth="1.500">
        <ellipse cx="647" cy="288" rx="4" ry="2.500" />
        <ellipse cx="602" cy="326" rx="4" ry="2.500" />
      </g>

      {/* selected component */}
      <g fill="none" stroke="#ff2828" strokeWidth="1.300">
        <path d="M545 434L584 447L638 403L601 390L569 411Z" strokeWidth="2" />
        <path d="M601 384L632 394V406 M601 384V399L632 408L638 403 M601 389L632 399 M601 384L558 420V430 M603 387L561 422 M632 395L590 430V446 M628 402L588 440 M558 420L590 430 M558 430L580 437L590 430 M560 424V434 M574 426V435 M601 399L569 427 M551 429L590 443 M563 434L567 441" />
        <path d="M585 411L591 405L594 408L600 402 M590 413L601 405 M597 405L603 407 M581 415L591 419 M603 397L610 400 M615 393L621 399 M613 396L624 398 M618 412L628 404 M607 420L614 414" strokeWidth="2.500" />
      </g>

      {/* highlighted label and datum triad */}
      <path d="M620 408H629V423H620Z M603 419H613V435H603Z M634 415H802V431H634Z" fill="#9cb2d2" />
      <text x="635" y="427" fontFamily="Roboto, sans-serif" fontWeight="300" fontSize="16" fill="#9c5c30">3D_58132100-7777334</text>
      <path d="M627 409V456 M608 427L646 439 M625 447L637 436" stroke="#8c5838" fill="none" />
      <path d="M627 430V444" stroke="#30f0f0" strokeWidth="1.500" />
      <path d="M614 439L627 443" stroke="#30e838" strokeWidth="1.500" />
      <circle cx="627" cy="430" r="3" fill="#30f8f8" />
      <circle cx="614" cy="439" r="2.500" fill="#28f030" />
      <circle cx="637" cy="436" r="2.500" fill="#e83c3c" />
    </svg>
  );
}

export default function App() {
  return (
    <>
      <GlobalStyle />
      <Frame>
        <TitleBar>
          <Title>
            <svg width="16" height="16" viewBox="0 0 16 16" aria-hidden="true">
              <path d="M2.500 2.500H14.500V14.500H4.500L2.500 12.500Z" fill="#e8e4a0" stroke={INK} />
              <path d="M4.500 4.500H11.500V11.500H4.500Z" fill="#60d8d8" stroke="#fff" />
              <path d="M14 3V14H5" fill="none" stroke={INK} strokeWidth="2" />
            </svg>
            3D (活动的) - Pro/ENGINEER Wildfire 5.0
          </Title>
          <WindowButtons>
            <WindowButton aria-label="最小化">
              <svg width="12" height="5" viewBox="0 0 12 5">
                <path d="M0.500 0.500H11.500V4H0.500Z" fill="#fff" stroke="#3c4658" />
              </svg>
            </WindowButton>
            <WindowButton aria-label="最大化">
              <svg width="12" height="10" viewBox="0 0 12 10">
                <path d="M2 2H10V8H2Z" fill="none" stroke="#3c4658" strokeWidth="4" />
                <path d="M2 2H10V8H2Z" fill="none" stroke="#fff" strokeWidth="2" />
              </svg>
            </WindowButton>
            <WindowButton $close aria-label="关闭">
              <svg width="12" height="10" viewBox="0 0 12 10">
                <path d="M2 1L10 9 M10 1L2 9" stroke="#4c3438" strokeWidth="4" />
                <path d="M2 1L10 9 M10 1L2 9" stroke="#fff" strokeWidth="2.500" />
              </svg>
            </WindowButton>
          </WindowButtons>
        </TitleBar>

        <Client>
          <MenuBar>
            {menus.map((m) => (
              <MenuItem key={m}>{m}</MenuItem>
            ))}
          </MenuBar>

          <ToolbarArea>
            <Tools items={rowOne} />
            <Tools items={rowTwo} />
          </ToolbarArea>

          <StatusBar>
            <Message />
            <StatusLight>
              <Icon name="light" />
            </StatusLight>
            <Selected>选取了 1 项</Selected>
            <FilterBox>
              <select aria-label="过滤器" defaultValue="智能">
                <option>智能</option>
              </select>
              <Arrow />
            </FilterBox>
          </StatusBar>

          <Main>
            <Navigator>
              <Tabs>
                <Tab $active aria-label="模型树">
                  <Icon name="tree" />
                </Tab>
                <Tab aria-label="文件夹浏览器">
                  <Icon name="folders" />
                </Tab>
                <Tab aria-label="收藏夹">
                  <Icon name="favorites" />
                </Tab>
              </Tabs>
              <Panel>
                <PanelHead>
                  <h2>模型树</h2>
                  <HeadTool aria-label="设置">
                    <Icon name="settings" />
                    <Arrow />
                  </HeadTool>
                  <HeadTool aria-label="显示">
                    <Icon name="show" />
                    <Arrow />
                  </HeadTool>
                </PanelHead>
                <TreeBox>
                  <Tree>
                    {parts.map((p) => (
                      <TreeRow key={p}>
                        <button>
                          <PartIcon />
                          {p}.PRT
                        </button>
                      </TreeRow>
                    ))}
                  </Tree>
                  <ScrollBar>
                    <button aria-label="向上滚动">
                      <svg width="8" height="5" viewBox="0 0 8 5">
                        <path d="M0 5H8L4 0Z" fill="#7fa3bd" />
                      </svg>
                    </button>
                    <Track>
                      <TrackBefore />
                      <Thumb>
                        <svg width="3" height="8" viewBox="0 0 3 8">
                          <path d="M0 0.500H3 M0 2.500H3 M0 4.500H3 M0 6.500H3" stroke="#5c7c9c" />
                        </svg>
                      </Thumb>
                      <TrackAfter />
                    </Track>
                    <button aria-label="向下滚动">
                      <svg width="8" height="5" viewBox="0 0 8 5">
                        <path d="M0 0H8L4 5Z" fill="#7fa3bd" />
                      </svg>
                    </button>
                  </ScrollBar>
                </TreeBox>
              </Panel>
            </Navigator>

            <Sash>
              <SashHandle aria-label="调整面板" />
              <SashHandle $raised aria-label="折叠面板" />
            </Sash>

            <Viewport>
              <Mold />
            </Viewport>

            <SideTools>
              <SideTop />
              <SideTool items={sideOne} />
              <SideTool items={sideTwo} />
            </SideTools>
          </Main>
        </Client>
      </Frame>
    </>
  );
}
